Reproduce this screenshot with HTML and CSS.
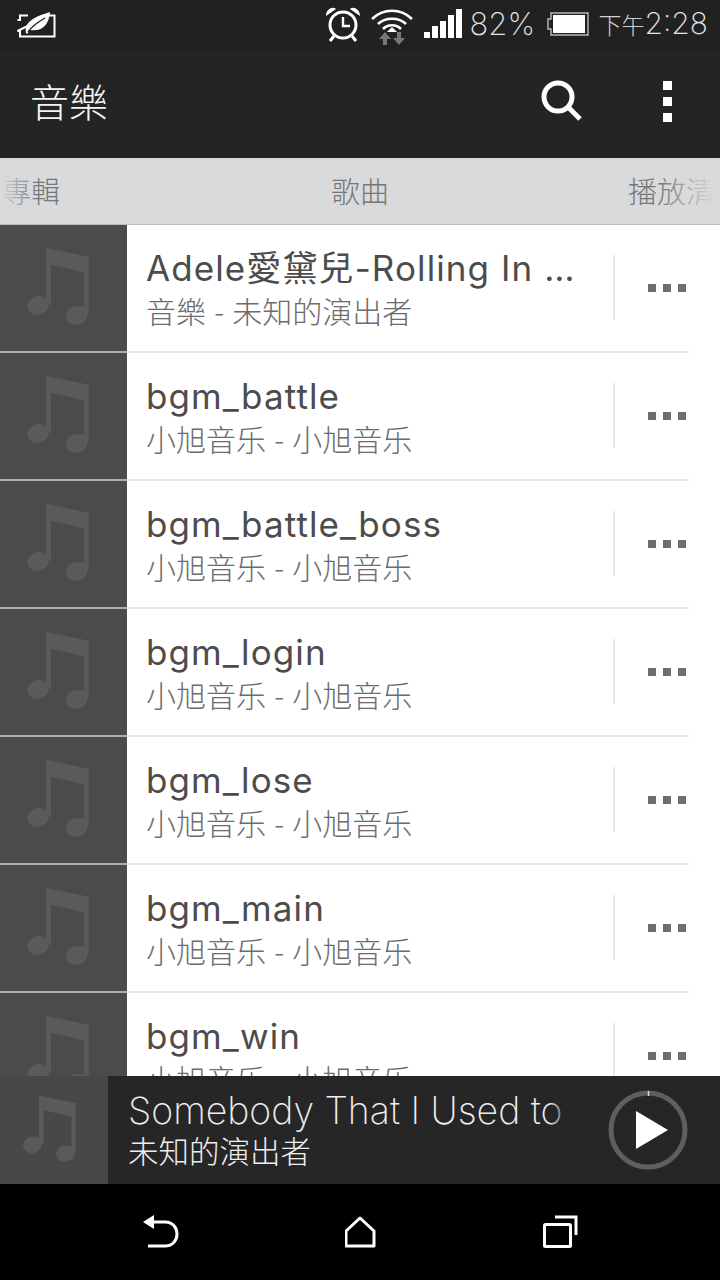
FILE: index.html
```html
<!DOCTYPE html>
<html lang="zh-Hant">
<head>
<meta charset="utf-8">
<title>音樂</title>
<link rel="stylesheet" href="styles.css">
</head>
<body>
<svg class="defs" width="0" height="0" aria-hidden="true">
  <symbol id="note" viewBox="0 0 127 127">
    <path d="M46 23 L89 32 V90 H84 V48 L51 40 V80 H46 Z"/>
    <ellipse cx="38" cy="81" rx="11" ry="9.5" transform="rotate(-15 38 81)"/>
    <ellipse cx="77" cy="91" rx="11" ry="9.5" transform="rotate(-15 77 91)"/>
  </symbol>
</svg>
<div class="phone">
  <div class="status">
    <svg class="st-leaf" width="40" height="26" viewBox="0 0 40 26">
      <path d="M1.5 8H4V3.5H12M33 3.5H38.5V24.5H4V19H1.5Z" fill="none" stroke="#fff" stroke-width="2"/>
      <path d="M10 21C8 10 18 5 34 0C33 12 27 20 14 18L11 22Z" fill="#fff"/>
      <path d="M12 20C16 14 22 10 29 6" fill="none" stroke="#212121" stroke-width="1.4"/>
    </svg>
    <div class="st-right">
      <svg class="st-alarm" width="36" height="36" viewBox="0 0 36 36">
        <circle cx="18" cy="19" r="13" fill="none" stroke="#fff" stroke-width="3"/>
        <path d="M18 11V20H25" fill="none" stroke="#fff" stroke-width="2.4"/>
        <path d="M1 10C1 3 8 0 11 3ZM35 10C35 3 28 0 25 3Z" fill="#fff"/>
        <path d="M9 30L5 35M27 30L31 35" stroke="#fff" stroke-width="3"/>
      </svg>
      <svg class="st-wifi" width="42" height="42" viewBox="0 0 42 42">
        <path d="M1 14C12 3 30 3 41 14M7 19C14 12 28 12 35 19M12 24C17 19 25 19 30 24" fill="none" stroke="#fff" stroke-width="2.6"/>
        <path d="M21 22L26 27H16Z" fill="#fff"/>
        <path d="M14 27L20 34H16V40H12V34H8ZM28 40L22 33H26V27H30V33H34Z" fill="#777"/>
      </svg>
      <div class="st-bars">
        <i class="b1"></i><i class="b2"></i><i class="b3"></i><i class="b4"></i><i class="b5"></i>
      </div>
      <span class="st-pct">82%</span>
      <svg class="st-batt" width="46" height="26" viewBox="0 0 46 26">
        <path d="M5 8H8V2H45V24H8V18H5Z" fill="none" stroke="#bbb" stroke-width="1.4"/>
        <rect x="10" y="4" width="32" height="18" fill="#fff"/>
      </svg>
      <span class="st-time"><span class="st-ampm">下午</span>2:28</span>
    </div>
  </div>

  <header class="bar">
    <h1 class="bar-title">音樂</h1>
    <svg class="bar-search" width="42" height="42" viewBox="0 0 42 42">
      <circle cx="18" cy="18" r="14" fill="none" stroke="#fff" stroke-width="5"/>
      <path d="M28 28L40 40" stroke="#fff" stroke-width="5"/>
    </svg>
    <div class="bar-more"><i></i><i></i><i></i></div>
  </header>

  <nav class="tabs">
    <span class="tab tab-left">專輯</span>
    <span class="tab tab-mid">歌曲</span>
    <span class="tab tab-right">播放清單</span>
    <div class="fade fade-l"></div>
    <div class="fade fade-r"></div>
  </nav>

  <main class="list">
    <div class="row">
      <svg class="thumb"><use href="#note"/></svg>
      <div class="info"><div class="name">Adele愛黛兒-Rolling In The Deep</div><div class="sub">音樂 - 未知的演出者</div></div>
      <div class="dots"><i></i><i></i><i></i></div>
    </div>
    <div class="row">
      <svg class="thumb"><use href="#note"/></svg>
      <div class="info"><div class="name">bgm_battle</div><div class="sub">小旭音乐 - 小旭音乐</div></div>
      <div class="dots"><i></i><i></i><i></i></div>
    </div>
    <div class="row">
      <svg class="thumb"><use href="#note"/></svg>
      <div class="info"><div class="name">bgm_battle_boss</div><div class="sub">小旭音乐 - 小旭音乐</div></div>
      <div class="dots"><i></i><i></i><i></i></div>
    </div>
    <div class="row">
      <svg class="thumb"><use href="#note"/></svg>
      <div class="info"><div class="name">bgm_login</div><div class="sub">小旭音乐 - 小旭音乐</div></div>
      <div class="dots"><i></i><i></i><i></i></div>
    </div>
    <div class="row">
      <svg class="thumb"><use href="#note"/></svg>
      <div class="info"><div class="name">bgm_lose</div><div class="sub">小旭音乐 - 小旭音乐</div></div>
      <div class="dots"><i></i><i></i><i></i></div>
    </div>
    <div class="row">
      <svg class="thumb"><use href="#note"/></svg>
      <div class="info"><div class="name">bgm_main</div><div class="sub">小旭音乐 - 小旭音乐</div></div>
      <div class="dots"><i></i><i></i><i></i></div>
    </div>
    <div class="row">
      <svg class="thumb"><use href="#note"/></svg>
      <div class="info"><div class="name">bgm_win</div><div class="sub">小旭音乐 - 小旭音乐</div></div>
      <div class="dots"><i></i><i></i><i></i></div>
    </div>
  </main>

  <section class="player">
    <svg class="p-thumb"><use href="#note"/></svg>
    <div class="p-info">
      <div class="p-title">Somebody That I Used to Love</div>
      <div class="p-sub">未知的演出者</div>
      <div class="p-fade"></div>
    </div>
    <svg class="p-btn" width="80" height="80" viewBox="0 0 80 80">
      <circle cx="40" cy="40" r="37" fill="none" stroke="#5f5f5f" stroke-width="5"/>
      <path d="M40.5 1V6" stroke="#ddd" stroke-width="1.5"/>
      <path d="M28 21L60 40L28 59Z" fill="#fff"/>
    </svg>
  </section>

  <footer class="nav">
    <svg width="36" height="34" viewBox="0 0 36 34">
      <path d="M5 7H22C38 7 38 31 22 31H5" fill="none" stroke="#fff" stroke-width="3"/>
      <path d="M0 7L11 0V14Z" fill="#fff"/>
    </svg>
    <svg width="32" height="32" viewBox="0 0 32 32">
      <path d="M15 2L29 15V30H1V15Z" fill="none" stroke="#fff" stroke-width="3" stroke-linejoin="round"/>
    </svg>
    <svg width="36" height="34" viewBox="0 0 36 34">
      <rect x="2.5" y="9.5" width="26" height="22" fill="none" stroke="#fff" stroke-width="3" rx="1"/>
      <path d="M13 2H34V20" fill="none" stroke="#fff" stroke-width="3"/>
    </svg>
  </footer>
</div>
</body>
</html>
```
FILE: styles.css
```css
* { box-sizing: border-box; }
html, body { margin: 0; padding: 0; background: #000; }
body { font-family: "Inter", "Noto Sans CJK TC", sans-serif; }
.defs { position: absolute; }
.phone { width: 720px; height: 1280px; display: flex; flex-direction: column; overflow: hidden; background: #fff; }

/* status bar */
.status { height: 50px; flex: none; background: #212121; display: flex; align-items: center; justify-content: space-between; padding: 0 12px 0 16px; color: #e4e4e4; }
.st-right { display: flex; align-items: center; }
.st-alarm { margin-right: 10px; margin-top: -2px; }
.st-wifi { margin-right: 11px; margin-top: 1px; }
.st-bars { display: flex; align-items: flex-end; gap: 2px; height: 29px; margin-right: 8px; margin-top: -3px; }
.st-bars i { display: block; width: 6px; background: #fff; }
.b1 { height: 6px; } .b2 { height: 12px; } .b3 { height: 17px; } .b4 { height: 23px; } .b5 { height: 29px; }
.st-pct { font-family: "Inter", sans-serif; font-weight: 200; font-size: 31px; width: 73px; margin-top: -4px; white-space: nowrap; }
.st-batt { margin-right: 10px; margin-top: -2px; }
.st-time { font-family: "Inter", "Noto Sans CJK TC", sans-serif; font-weight: 200; font-size: 30px; margin-top: -4px; white-space: nowrap; }
.st-ampm { font-family: "Noto Sans CJK TC", sans-serif; font-weight: 300; font-size: 23px; color: #d0d0d0; }

/* action bar */
.bar { height: 108px; flex: none; background: #242424; display: flex; align-items: center; padding: 0 0 8px 30px; }
.bar-title { margin: 0; flex: 1; font-size: 39px; font-weight: 300; color: #f4f4f4; font-family: "Noto Sans CJK TC", sans-serif; }
.bar-search { margin-right: 81px; }
.bar-more { display: flex; flex-direction: column; gap: 7px; width: 57px; margin-top: 2px; }
.bar-more i { display: block; width: 9px; height: 9px; background: #fff; }

/* tabs */
.tabs { position: relative; height: 66px; flex: none; background: #d9dadc; display: grid; grid-template-columns: minmax(0, 1fr) auto minmax(0, 1fr); align-items: center; overflow: hidden; font-family: "Noto Sans CJK TC", sans-serif; font-weight: 300; font-size: 29px; color: #777; padding: 0 0 3px 2px; white-space: nowrap; }
.tab-right { justify-self: end; margin-right: -24px; }
.tab-mid { margin-left: -2px; }
.fade { position: absolute; top: 0; bottom: 0; }
.fade-l { left: 0; width: 36px; background: linear-gradient(to right, #d9dadc, rgba(217,218,220,0)); }
.fade-r { right: 0; width: 60px; background: linear-gradient(to left, #d9dadc 10%, rgba(217,218,220,0)); }

/* list */
.list { flex: 1; min-height: 0; overflow: hidden; border-top: 1px solid #bcbcbc; }
.row { position: relative; height: 128px; display: flex; align-items: stretch; flex: none; }
.thumb { width: 127px; height: 128px; flex: none; background: #4b4b4b; fill: #5a5a5a; border-bottom: 2px solid #b0b0b0; }
.info { width: 562px; padding-left: 20px; display: flex; flex-direction: column; justify-content: center; border-bottom: 2px solid #e6e6e6; }
.name { font-size: 35px; letter-spacing: 1.1px; line-height: 44px; margin-top: -1px; margin-left: -1px; color: #4c4c4c; white-space: nowrap; overflow: hidden; text-overflow: ellipsis; width: 436px; }
.sub { font-family: "Noto Sans CJK TC", sans-serif; font-weight: 300; font-size: 30px; line-height: 40px; color: #6c6c6c; white-space: nowrap; word-spacing: 1.5px; margin-left: -1px; }
.dots { position: absolute; display: flex; gap: 7px; left: 613px; top: 30px; width: 107px; height: 65px; border-left: 2px solid #e8e8e8; padding-left: 33px; align-items: center; }
.dots i { display: block; width: 8px; height: 8px; background: #6e6e6e; }

/* player */
.player { height: 108px; flex: none; background: #262626; display: flex; align-items: center; }
.p-thumb { width: 108px; height: 108px; flex: none; background: #484848; fill: #5a5a5a; }
.p-info { position: relative; width: 437px; margin-left: 20px; overflow: hidden; white-space: nowrap; color: #eee; margin-top: -7px; }
.p-title { font-family: "Inter", sans-serif; font-weight: 200; font-size: 37.4px; line-height: 46px; }
.p-sub { font-family: "Noto Sans CJK TC", sans-serif; font-weight: 300; font-size: 30.5px; line-height: 32px; }
.p-fade { position: absolute; right: 0; top: 0; bottom: 0; width: 16px; background: linear-gradient(to left, rgba(38,38,38,0.7), rgba(38,38,38,0)); }
.p-btn { margin-left: 43px; }

/* navigation */
.nav { height: 96px; flex: none; background: #000; display: flex; align-items: center; justify-content: space-between; padding: 0 142px 0 143px; }
```
